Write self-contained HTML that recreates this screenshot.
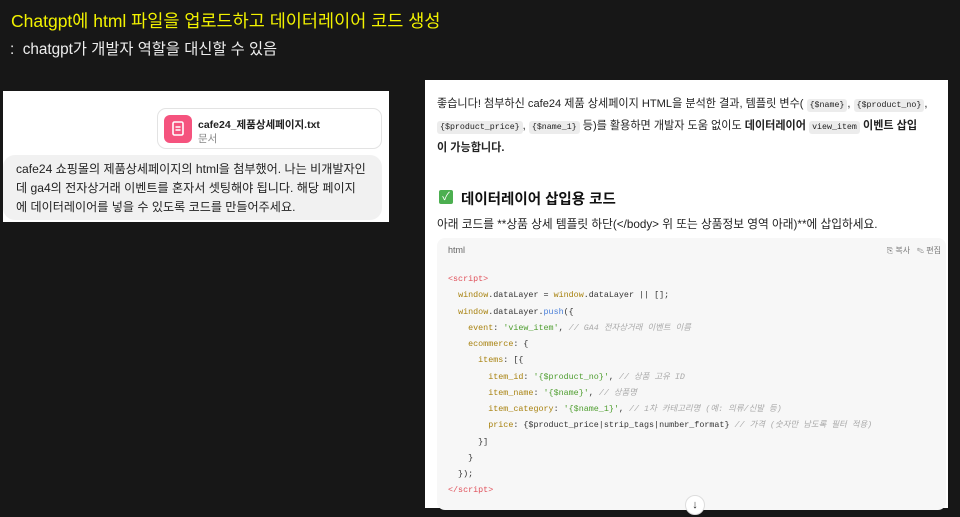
<!DOCTYPE html>
<html><head><meta charset="utf-8"><style>
*{margin:0;padding:0;box-sizing:border-box}
body{width:960px;height:517px;background:#171717;position:relative;overflow:hidden;font-family:"Liberation Sans","Noto Sans CJK KR",sans-serif}
.a{position:absolute;white-space:nowrap}
.t{left:11px;top:8px;font-size:17.5px;color:#f2f200}
.s{left:10px;top:37px;font-size:15.3px;color:#eee}
#lp{position:absolute;left:3px;top:91px;width:386px;height:131px;background:#fff}
.card{position:absolute;left:154px;top:17px;width:225px;height:41px;border:1px solid #e3e3e3;border-radius:9px}
.ic{position:absolute;left:6px;top:6px;width:28px;height:28px;background:#f5537e;border-radius:6px}
.bub{position:absolute;left:0;top:64px;width:379px;height:65px;background:#f1f1f1;border-radius:12px;font-size:12.1px;color:#222;line-height:19px;padding:5px 0 0 13px}
#rp{position:absolute;left:425px;top:80px;width:523px;height:428px;background:#fff;font-size:11.7px;color:#222}
code.i{font-family:"Liberation Mono",monospace;font-size:8.3px;background:#ececec;border-radius:3px;padding:2px 3px}
.cb{position:absolute;left:12px;top:158px;width:509px;height:272px;background:#f7f7f7;border-radius:8px}
pre{position:absolute;left:11px;top:33px;font-family:"Liberation Mono",monospace;font-size:8.4px;line-height:16.25px;color:#333}
.r{color:#e0505a}.y{color:#a8820f}.g{color:#4f9e30}.b{color:#4a7fd8}.c{color:#aaa;font-style:italic}
</style></head><body>
<div class="a t">Chatgpt에 html 파일을 업로드하고 데이터레이어 코드 생성</div>
<div class="a s">:&nbsp; chatgpt가 개발자 역할을 대신할 수 있음</div>
<div id="lp">
 <div class="card"><div class="ic"><svg width="28" height="28"><rect x="9" y="7" width="10" height="13" rx="1.5" fill="none" stroke="#fff" stroke-width="1.6"/><path d="M11.5 12h5M11.5 15h5" stroke="#fff" stroke-width="1.4"/></svg></div>
 <div class="a" style="left:40px;top:8px;font-size:10.5px;font-weight:bold;color:#222">cafe24_제품상세페이지.txt</div>
 <div class="a" style="left:40px;top:22px;font-size:10.5px;color:#888">문서</div></div>
 <div class="bub">cafe24 쇼핑몰의 제품상세페이지의 html을 첨부했어. 나는 비개발자인<br>데 ga4의 전자상거래 이벤트를 혼자서 셋팅해야 됩니다. 해당 페이지<br>에 데이터레이어를 넣을 수 있도록 코드를 만들어주세요.</div>
</div>
<div id="rp">
 <div class="a" style="left:12px;top:14px;line-height:20px;font-size:11.1px">좋습니다! 첨부하신 cafe24 제품 상세페이지 HTML을 분석한 결과, 템플릿 변수( <code class="i">{$name}</code>, <code class="i">{$product_no}</code>,<br><code class="i">{$product_price}</code>, <code class="i">{$name_1}</code> 등)를 활용하면 개발자 도움 없이도 <b>데이터레이어</b> <code class="i">view_item</code> <b>이벤트 삽입</b><br><b>이 가능합니다.</b></div>
 <div class="a" style="left:14px;top:110px;width:14px;height:14px;background:#4caf50;border-radius:2px;color:#fff;font-size:11px;text-align:center;line-height:14px">✓</div>
 <div class="a" style="left:36px;top:108px;font-size:14.5px;font-weight:bold;color:#111">데이터레이어 삽입용 코드</div>
 <div class="a" style="left:12px;top:135px">아래 코드를 **상품 상세 템플릿 하단(&lt;/body&gt; 위 또는 상품정보 영역 아래)**에 삽입하세요.</div>
 <div class="cb">
  <div class="a" style="left:11px;top:7px;font-size:9px;color:#666">html</div>
  <div class="a" style="right:5px;top:7px;font-size:8px;color:#777">⎘ 복사 &nbsp; ✎ 편집</div>
<pre><span class="r">&lt;script&gt;</span>
  <span class="y">window</span>.dataLayer = <span class="y">window</span>.dataLayer || [];
  <span class="y">window</span>.dataLayer.<span class="b">push</span>({
    <span class="y">event</span>: <span class="g">'view_item'</span>, <span class="c">// GA4 전자상거래 이벤트 이름</span>
    <span class="y">ecommerce</span>: {
      <span class="y">items</span>: [{
        <span class="y">item_id</span>: <span class="g">'{$product_no}'</span>, <span class="c">// 상품 고유 ID</span>
        <span class="y">item_name</span>: <span class="g">'{$name}'</span>, <span class="c">// 상품명</span>
        <span class="y">item_category</span>: <span class="g">'{$name_1}'</span>, <span class="c">// 1차 카테고리명 (예: 의류/신발 등)</span>
        <span class="y">price</span>: {$product_price|strip_tags|number_format} <span class="c">// 가격 (숫자만 남도록 필터 적용)</span>
      }]
    }
  });
<span class="r">&lt;/script&gt;</span></pre>
 </div>
 <div class="a" style="left:260px;top:415px;width:20px;height:20px;border:1px solid #ddd;border-radius:50%;background:#fff;text-align:center;font-size:11px;line-height:18px">↓</div>
</div>
</body></html>
